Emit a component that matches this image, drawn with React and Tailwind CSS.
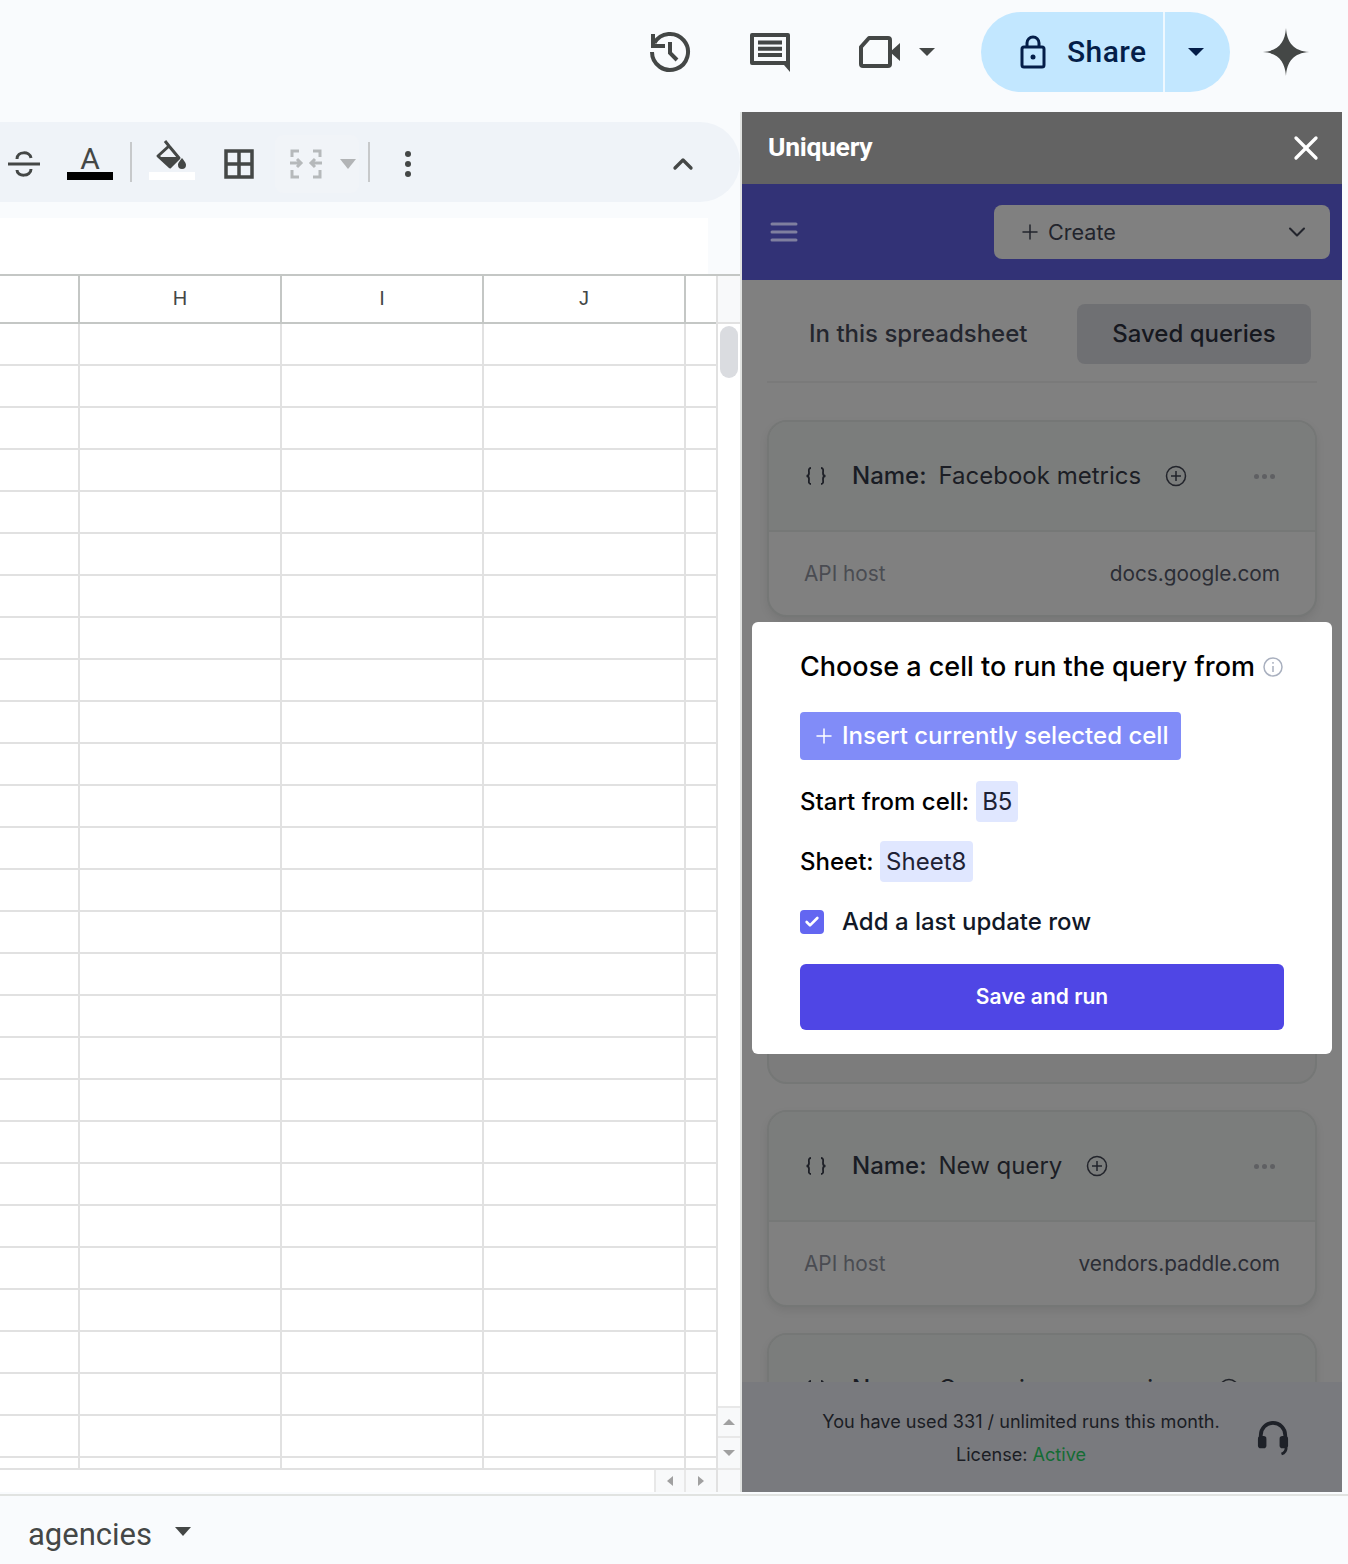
// Planilha com painel lateral Uniquery e modal de escolha de celula por cima.

import { X, Plus, ChevronDown, ChevronUp, Check } from 'lucide-react';

const ROWS = Array.from({ length: 28 });
const CELLS = ['w-[80px]', 'w-[202px]', 'w-[202px]', 'w-[202px]', 'w-[30px]'];

function HistoryIcon() {
  return (
    <svg width="44" height="44" viewBox="0 0 44 44" fill="none" stroke="#444746" strokeWidth="4">
      <path d="M6.400 13A18 18 0 1 1 4 22" />
      <path d="M5 6v10h10" strokeLinecap="square" />
      <path d="M22 12v11l7 7" />
    </svg>
  );
}

function CommentIcon() {
  return (
    <svg width="42" height="42" viewBox="0 0 42 42">
      <path fill="#444746" fillRule="evenodd" d="M3 2h36a2 2 0 0 1 2 2v37l-6-7H3a2 2 0 0 1-2-2V4a2 2 0 0 1 2-2zm2 4v24h32V6z" />
      <path fill="#444746" d="M9 9.500h24v4H9zM9 15.800h24v4H9zM9 22h24v4H9z" />
    </svg>
  );
}

function MeetIcon() {
  return (
    <svg width="42" height="34" viewBox="0 0 42 34">
      <path fill="none" stroke="#444746" strokeWidth="4" strokeLinejoin="round" d="M10 3h19a2 2 0 0 1 2 2v24a2 2 0 0 1-2 2H4a2 2 0 0 1-2-2V12z" />
      <path fill="#444746" d="M31 17l10-9v18z" />
    </svg>
  );
}

function LockIcon() {
  return (
    <svg width="26" height="34" viewBox="0 0 26 34" fill="none" stroke="#041e49" strokeWidth="3">
      <rect x="2" y="12" width="22" height="20" rx="2" />
      <path d="M7 12V8a6 6 0 0 1 12 0v4" />
      <circle cx="13" cy="22" r="2.500" fill="#041e49" stroke="none" />
    </svg>
  );
}

function SparkIcon() {
  return (
    <svg width="48" height="48" viewBox="0 0 50 50">
      <path fill="#444746" d="M25 0C26 15 33 24 49 25 33 26 26 35 25 50 24 35 17 26 1 25 17 24 24 15 25 0z" />
    </svg>
  );
}

function StrikeIcon() {
  return (
    <svg width="36" height="30" viewBox="0 0 36 30" fill="none" stroke="#444746" strokeWidth="3">
      <path d="M2 15h32" />
      <path d="M11 10c0-8 13-8 14-1M25 20c0 8-14 8-14 1" />
    </svg>
  );
}

function FillIcon() {
  return (
    <svg width="32" height="30" viewBox="0 0 32 30">
      <path fill="none" stroke="#444746" strokeWidth="3" d="M10 1l4 5M14 6l10 12-9 9L3 16z" strokeLinejoin="round" />
      <path fill="#444746" d="M4 17h20l-9 9.500z" />
      <path fill="#444746" d="M27 18c3 4 4 5 4 7a4 4 0 0 1-8 0c0-2 1-3 4-7z" />
    </svg>
  );
}

function BordersIcon() {
  return (
    <svg width="30" height="30" viewBox="0 0 30 30" fill="none" stroke="#444746" strokeWidth="3.500">
      <path d="M2 2h26v26H2zM15 2v26M2 15h26" />
    </svg>
  );
}

function MergeIcon() {
  return (
    <svg width="34" height="30" viewBox="0 0 34 30" fill="none" stroke="#b6b9bb" strokeWidth="3">
      <path d="M10 2H3v6M3 21v7h7M24 2h7v6M31 21v7h-7" />
      <path d="M1 14h11M8 10l4 4-4 4M33 14H22M26 10l-4 4 4 4" />
    </svg>
  );
}

function Braces() {
  return (
    <svg width="22" height="20" viewBox="0 0 22 20" fill="none" stroke="#1e2027" strokeWidth="1.800">
      <path d="M6 2C3 2 4 5 4 7c0 2-1 3-2.500 3C3 10 4 11 4 13c0 2-1 5 2 5" />
      <path d="M16 2c3 0 2 3 2 5 0 2 1 3 2.500 3-1.500 0-2.500 1-2.500 3 0 2 1 5-2 5" />
    </svg>
  );
}

function PlusCircle() {
  return (
    <svg width="22" height="22" viewBox="0 0 22 22" fill="none" stroke="#22242b" strokeWidth="1.500">
      <circle cx="11" cy="11" r="9.500" />
      <path d="M11 6v10M6 11h10" />
    </svg>
  );
}

function Headset() {
  return (
    <svg width="32" height="36" viewBox="0 0 34 38" fill="none">
      <path d="M4 20v-4a13 13 0 0 1 26 0v4" stroke="#1e2128" strokeWidth="4" />
      <rect x="1" y="17" width="9" height="13" rx="3" fill="#1e2128" />
      <rect x="24" y="17" width="9" height="13" rx="3" fill="#1e2128" />
      <path d="M31 29c0 4-2 6-5 7" stroke="#1e2128" strokeWidth="3" />
    </svg>
  );
}

function MenuLines() {
  return (
    <svg width="28" height="20" viewBox="0 0 28 20" fill="none" stroke="#7f7f9f" strokeWidth="3" strokeLinecap="round">
      <path d="M2 2h24M2 10h24M2 18h24" />
    </svg>
  );
}

function QueryCard({ name, host, clip }) {
  return (
    <div className="w-[550px] shrink-0 mx-auto rounded-[20px] border-2 border-[#757776] bg-[#808080] shadow-[0_4px_8px_rgba(0,0,0,0.08)]">
      <div className="h-[110px] bg-[#7b7d7c] rounded-t-[18px] border-b-2 border-[#767877] pl-[36px] pr-[40px] flex items-center whitespace-nowrap">
        <Braces />
        <span className="ml-[25px] font-medium text-[#191c24]">Name:</span>
        <span className="ml-[12px] text-[#1c1e25]">{name}</span>
        <span className="ml-[24px] flex"><PlusCircle /></span>
        <span className="ml-auto flex gap-[3px]">
          <i className="size-[5px] rounded-full bg-[#5f6063]" />
          <i className="size-[5px] rounded-full bg-[#5f6063]" />
          <i className="size-[5px] rounded-full bg-[#5f6063]" />
        </span>
      </div>
      {!clip && (
        <div className="h-[83px] px-[35px] flex items-center justify-between text-[20.800px]">
          <span className="text-[#4a4c52]">API host</span>
          <span className="text-[#2b2d35]">{host}</span>
        </div>
      )}
    </div>
  );
}

function Modal() {
  return (
    <div className="absolute left-[10px] top-[510px] w-[580px] h-[432px] bg-white rounded-[6px] px-[48px] pt-[27px] text-black">
      <div className="h-[36px] flex items-center text-[27px] font-medium whitespace-nowrap">
        Choose a cell to run the query from
        <svg className="ml-[8px]" width="20" height="20" viewBox="0 0 20 20" fill="none" stroke="#a9b0bf" strokeWidth="1.500">
          <circle cx="10" cy="10" r="9" />
          <path d="M10 9v6M10 5v1.800" />
        </svg>
      </div>
      <button className="mt-[27px] h-[48px] w-[381px] rounded-[4px] bg-[#818cf8] text-white text-[24px] font-medium flex items-center pl-[12px] whitespace-nowrap">
        <Plus size={24} strokeWidth={1.5} />
        <span className="ml-[6px]">Insert currently selected cell</span>
      </button>
      <div className="mt-[21px] flex items-center text-[24px] font-medium">
        Start from cell:
        <span className="ml-[7px] h-[41px] px-[6px] rounded-[4px] bg-[#e0e7ff] text-[#1e2235] font-normal flex items-center">B5</span>
      </div>
      <div className="mt-[19px] flex items-center text-[24px] font-medium">
        Sheet:
        <span className="ml-[6px] h-[41px] px-[6.500px] rounded-[4px] bg-[#e0e7ff] text-[#1e2235] font-normal flex items-center">Sheet8</span>
      </div>
      <div className="mt-[28px] h-[24px] flex items-center text-[24px] font-medium text-[#111827]">
        <span className="size-[24px] rounded-[4px] bg-[#6366f1] text-white flex items-center justify-center">
          <Check size={16} strokeWidth={4} />
        </span>
        <span className="ml-[18px]">Add a last update row</span>
      </div>
      <button className="mt-[30px] w-full h-[66px] rounded-[6px] bg-[#4f46e5] text-white text-[21px] font-semibold">
        Save and run
      </button>
    </div>
  );
}

function Panel() {
  return (
    <div className="relative w-[600px] h-full flex flex-col bg-[#808080] font-['Inter',sans-serif] text-[24px]">
      <div className="h-[72px] shrink-0 bg-[#636363] flex items-center justify-between pl-[26px] pr-[16px]">
        <span className="pb-[2px] font-['Roboto',sans-serif] font-bold text-[26.500px] text-white tracking-[-0.3px]">Uniquery</span>
        <X size={40} color="white" strokeWidth={2} />
      </div>
      <div className="h-[96px] shrink-0 bg-[#323276] flex items-center justify-between pl-[28px] pr-[12px]">
        <MenuLines />
        <div className="w-[336px] h-[54px] rounded-[8px] bg-[#808080] flex items-center pl-[24px] pr-[19px] text-[#22242c] text-[21.600px]">
          <Plus size={24} strokeWidth={1.5} />
          <span className="ml-[6px]">Create</span>
          <ChevronDown className="ml-auto" size={28} strokeWidth={1.8} />
        </div>
      </div>
      <div className="flex-1 min-h-0 overflow-hidden flex flex-col">
        <div className="mx-[25px] h-[103px] shrink-0 border-b-2 border-[#7a7a7a] flex items-start pt-[24px]">
          <div className="h-[60px] w-[310px] pl-[42px] flex items-center text-[#24262e] font-medium whitespace-nowrap">In this spreadsheet</div>
          <div className="h-[60px] w-[234px] rounded-[8px] bg-[#6f7073] flex items-center justify-center text-[#16181f] font-medium whitespace-nowrap">Saved queries</div>
        </div>
        <div className="mt-[37px] flex flex-col gap-[26px]">
          <QueryCard name="Facebook metrics" host="docs.google.com" />
          <div className="w-[550px] h-[441px] shrink-0 mx-auto rounded-[20px] border-2 border-[#757776] bg-[#7c7c7c]" />
          <QueryCard name="New query" host="vendors.paddle.com" />
          <QueryCard name="Campaign comparison" clip />
        </div>
      </div>
      <div className="h-[110px] shrink-0 bg-[#797a7e] pt-[2px] flex items-center text-[18.100px] text-[#1b1d24] leading-[33px]">
        <div className="ml-[69px] w-[420px] text-center whitespace-nowrap">
          <div>You have used 331 / unlimited runs this month.</div>
          <div>License: <span className="text-[#146c34]">Active</span></div>
        </div>
        <span className="ml-[26px] flex"><Headset /></span>
      </div>
      <Modal />
    </div>
  );
}

function Toolbar() {
  return (
    <div className="mt-[10px] w-[740px] h-[80px] shrink-0 rounded-r-[40px] bg-[#eff3f8] pt-[4px] flex items-center">
      <span className="ml-[6px] flex"><StrikeIcon /></span>
      <div className="ml-[25px] w-[46px] h-[60px] pb-[14px] flex flex-col items-center justify-end">
        <span className="font-['Roboto',sans-serif] text-[30px] leading-[26px] text-[#444746]">A</span>
        <i className="w-full h-[8px] bg-black" />
      </div>
      <i className="ml-[17px] -mt-[4px] w-[2px] h-[40px] bg-[#c7c9cb]" />
      <div className="ml-[17px] w-[46px] h-[60px] pb-[14px] flex flex-col items-center justify-end">
        <span className="flex mb-[2px] -ml-[2px]"><FillIcon /></span>
        <i className="w-full h-[8px] bg-white" />
      </div>
      <span className="ml-[29px] flex"><BordersIcon /></span>
      <div className="ml-[21px] w-[84px] h-[58px] rounded-[8px] bg-[#f1f4f8] flex items-center pl-[14px]">
        <MergeIcon />
        <i className="ml-[17px] border-x-[8px] border-x-transparent border-t-[10px] border-t-[#b2b4b6]" />
      </div>
      <i className="ml-[9px] -mt-[4px] w-[2px] h-[40px] bg-[#c7c9cb]" />
      <div className="ml-[35px] flex flex-col gap-[4px]">
        <i className="size-[6px] rounded-full bg-[#444746]" />
        <i className="size-[6px] rounded-full bg-[#444746]" />
        <i className="size-[6px] rounded-full bg-[#444746]" />
      </div>
      <ChevronUp className="ml-auto mr-[41px]" size={32} strokeWidth={2.500} color="#444746" />
    </div>
  );
}

function Grid() {
  return (
    <div className="flex-1 min-h-0 flex bg-white border-t-2 border-[#c4c7c5]">
      <div className="w-[716px] overflow-hidden">
        <div className="h-[48px] flex border-b-2 border-[#c4c7c5] font-['Liberation_Sans',sans-serif] text-[20px] text-[#444746]">
          <div className="w-[80px] border-r-2 border-[#c4c7c5]" />
          {['H', 'I', 'J'].map((c) => (
            <div key={c} className="w-[202px] border-r-2 border-[#c4c7c5] flex items-center justify-center pb-[2px]">{c}</div>
          ))}
        </div>
        {ROWS.map((_, i) => (
          <div key={i} className={i === 27 ? 'h-[12px] flex border-b-2 border-[#e1e1e1]' : 'h-[42px] flex border-b-2 border-[#e1e1e1]'}>
            {CELLS.map((w, j) => (
              <div key={j} className={j < 4 ? `${w} border-r-2 border-[#e1e1e1]` : w} />
            ))}
          </div>
        ))}
        <div className="h-[22px] flex justify-end">
          <div className="w-[32px] h-full bg-[#f8f9fa] border-x-2 border-[#e8e8e8] flex items-center justify-center">
            <i className="border-y-[5px] border-y-transparent border-r-[6px] border-r-[#a0a0a0]" />
          </div>
          <div className="w-[30px] h-full bg-[#f8f9fa] flex items-center justify-center">
            <i className="border-y-[5px] border-y-transparent border-l-[6px] border-l-[#a0a0a0]" />
          </div>
        </div>
      </div>
      <div className="w-[24px] border-l-2 border-[#e1e1e1] flex flex-col">
        <div className="h-[48px] bg-[#f8f9fa] border-b-2 border-[#e1e1e1] shrink-0" />
        <i className="mt-[2px] ml-[2px] w-[18px] h-[52px] rounded-full bg-[#dadce0]" />
        <div className="mt-auto h-[32px] border-y-2 border-[#e8e8e8] bg-[#f8f9fa] flex items-center justify-center">
          <i className="border-x-[6px] border-x-transparent border-b-[6px] border-b-[#a0a0a0]" />
        </div>
        <div className="h-[32px] border-b-2 border-[#e8e8e8] bg-[#f8f9fa] flex items-center justify-center">
          <i className="border-x-[6px] border-x-transparent border-t-[6px] border-t-[#a0a0a0]" />
        </div>
        <div className="h-[22px] bg-[#f8f9fa]" />
      </div>
    </div>
  );
}

export default function App() {
  return (
    <div className="w-[1348px] h-[1564px] overflow-hidden flex flex-col bg-[#f9fbfd]">
      <header className="h-[112px] shrink-0 pb-[8px] flex items-center justify-end pr-[38px] font-['Roboto',sans-serif]">
        <HistoryIcon />
        <span className="ml-[57px] flex"><CommentIcon /></span>
        <span className="ml-[68px] flex"><MeetIcon /></span>
        <i className="ml-[18px] border-x-[8px] border-x-transparent border-t-[8px] border-t-[#444746]" />
        <div className="ml-[46px] h-[80px] w-[249px] rounded-full bg-[#c2e7ff] flex items-center">
          <span className="ml-[39px] flex"><LockIcon /></span>
          <span className="ml-[21px] pb-[2px] text-[30px] font-medium tracking-[0.4px] text-[#041e49]">Share</span>
          <i className="ml-auto w-[2px] h-full bg-[#eef8ff]" />
          <i className="ml-[23px] mr-[26px] border-x-[8px] border-x-transparent border-t-[8px] border-t-[#041e49]" />
        </div>
        <span className="ml-[32px] flex"><SparkIcon /></span>
      </header>

      <div className="h-[1380px] shrink-0 flex pr-[6px]">
        <div className="w-[742px] h-full flex flex-col border-r-2 border-[#e1e3e1]">
          <Toolbar />
          <div className="mt-[16px] w-[708px] h-[56px] shrink-0 bg-white" />
          <Grid />
        </div>
        <Panel />
      </div>

      <footer className="mt-[2px] h-[70px] shrink-0 border-t-2 border-[#e1e3e1] pt-[10px] flex items-center pl-[28px] font-['Roboto',sans-serif] text-[#444746]">
        <span className="text-[31px]">agencies</span>
        <i className="ml-[23px] mb-[8px] border-x-[8px] border-x-transparent border-t-[9px] border-t-[#444746]" />
      </footer>
    </div>
  );
}
